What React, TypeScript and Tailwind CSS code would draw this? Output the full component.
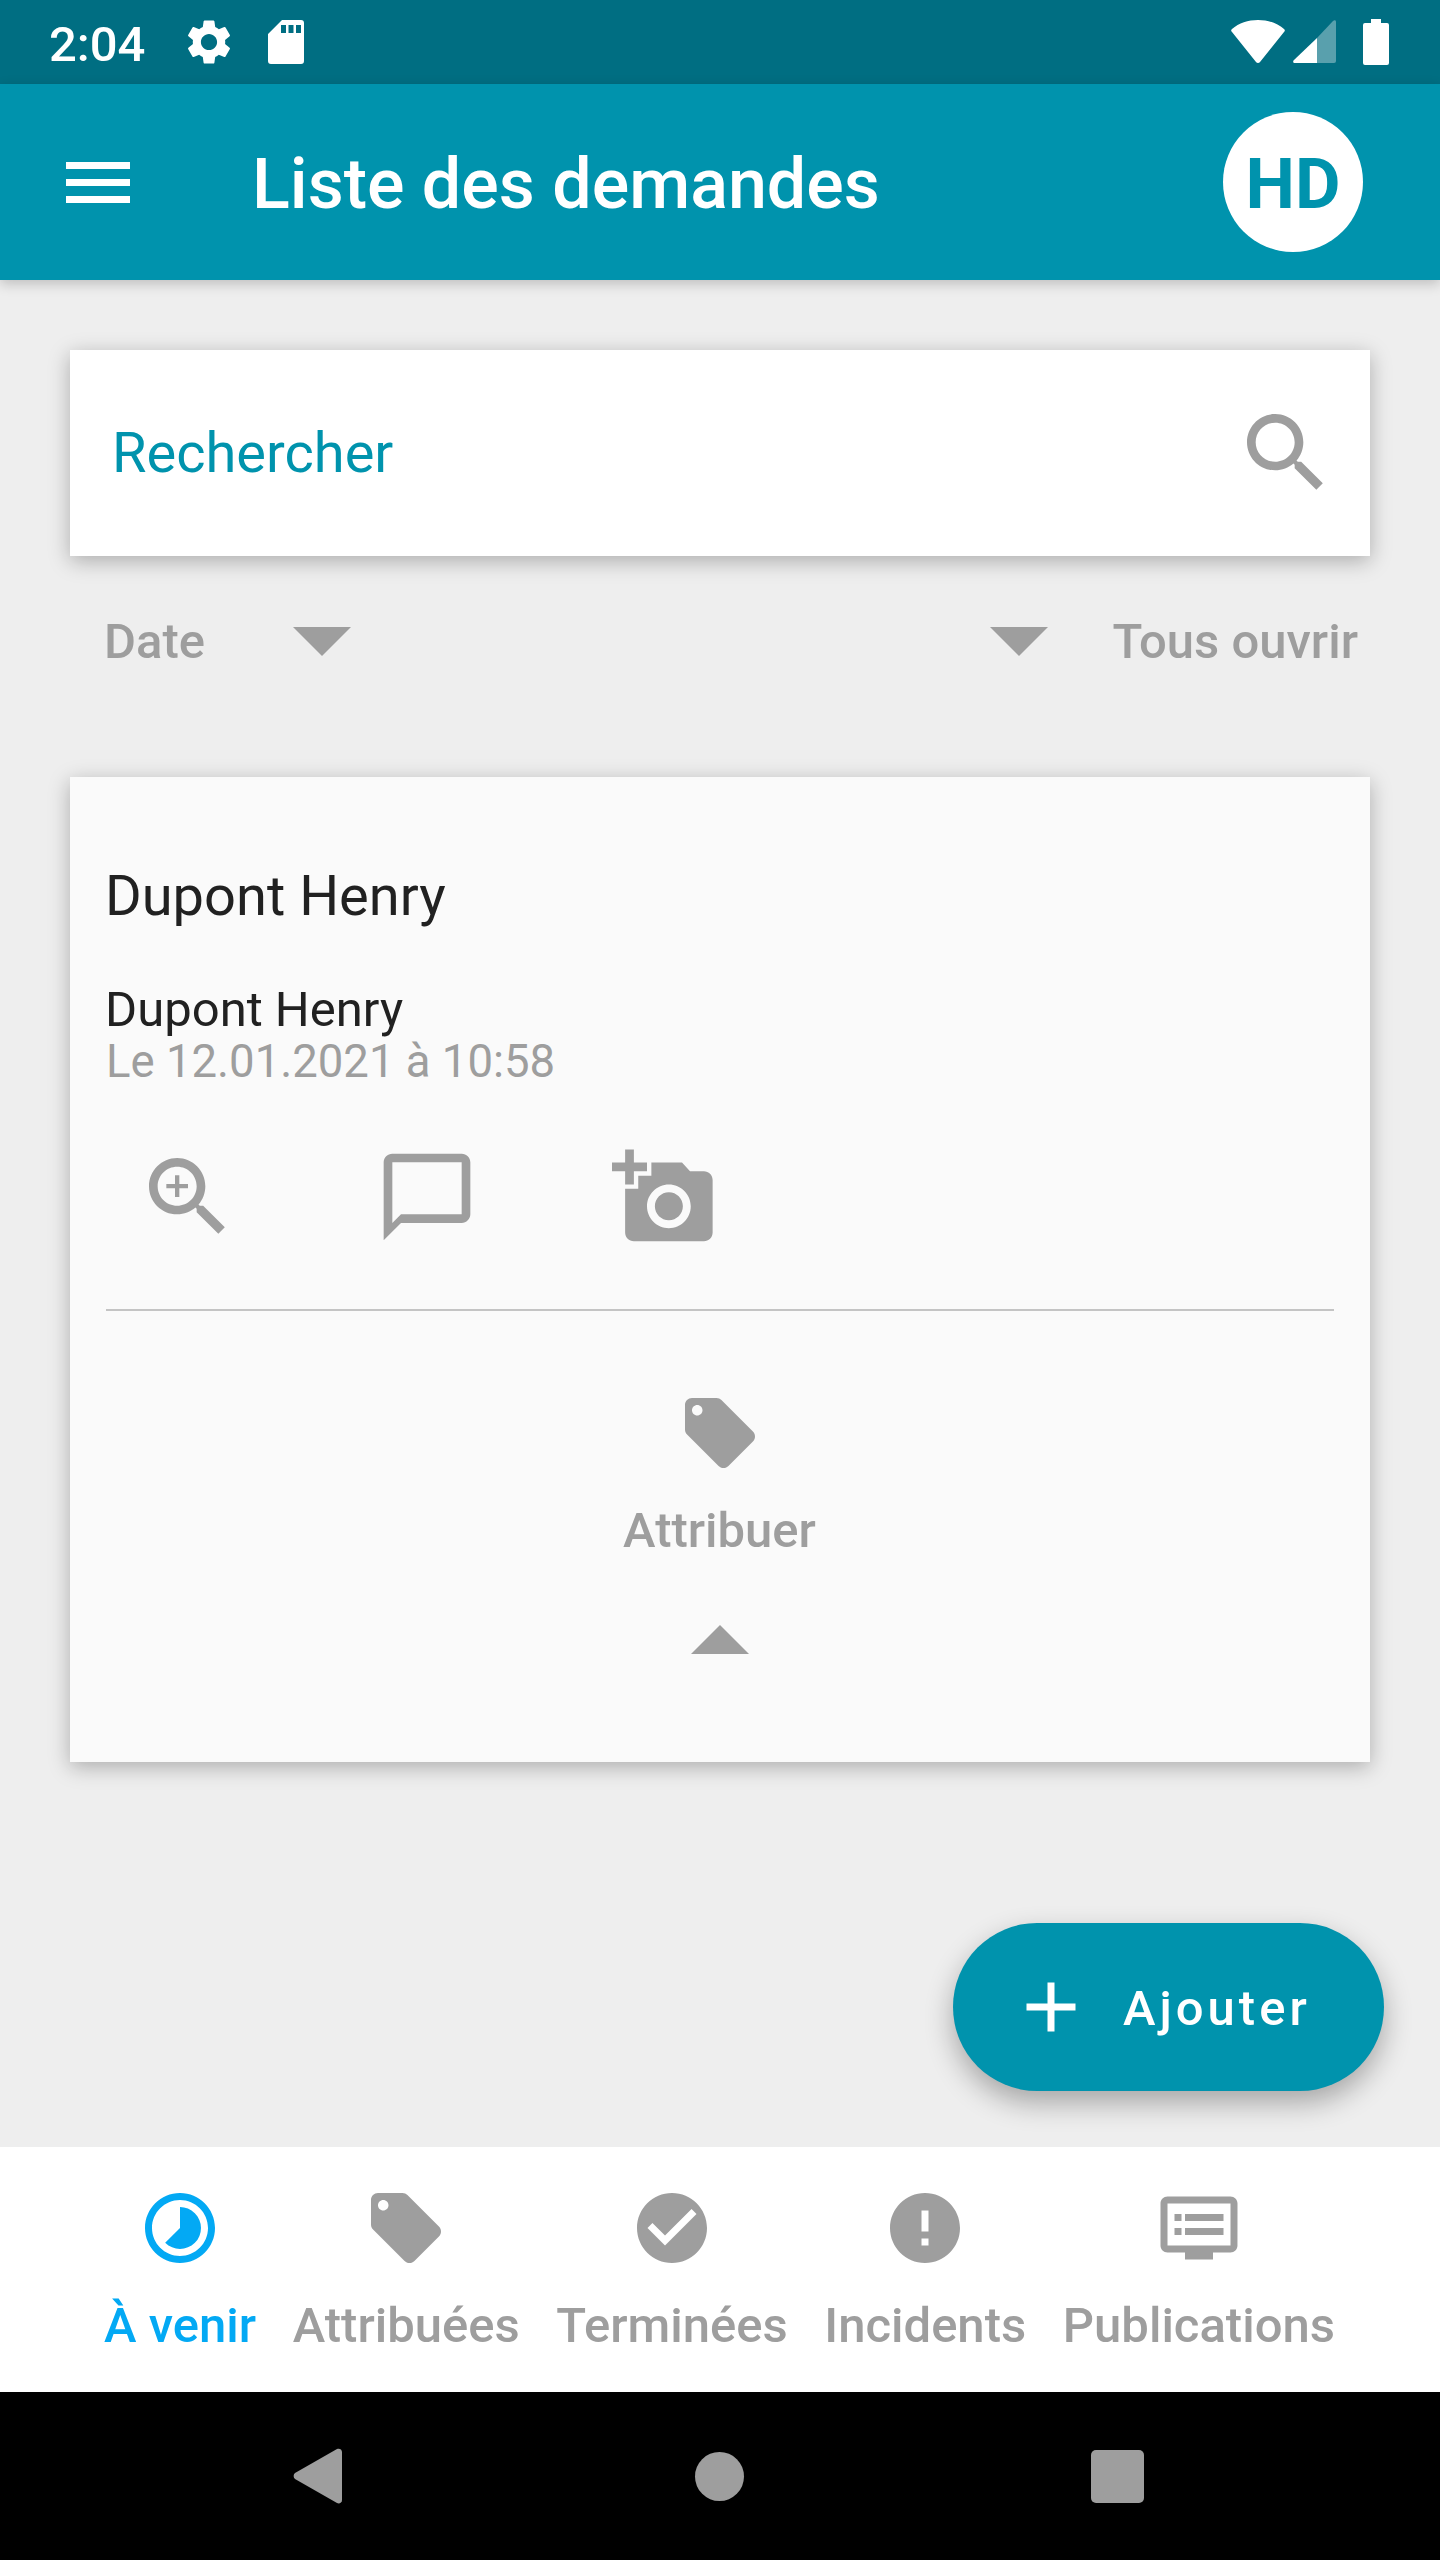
import React from 'react';

const roboto = { fontFamily: 'Roboto, sans-serif' };

const searchPath =
  'M15.5 14h-.79l-.28-.27C15.41 12.59 16 11.11 16 9.5 16 5.91 13.09 3 9.5 3S3 5.91 3 9.5 5.91 16 9.5 16c1.61 0 3.09-.59 4.23-1.57l.27.28v.79l5 4.99L20.49 19l-4.99-5zm-6 0C7.01 14 5 11.99 5 9.5S7.01 5 9.5 5 14 7.01 14 9.5 11.99 14 9.5 14z';

const Tag = ({ className }: { className: string }) => (
  <svg viewBox="0 0 24 24" className={className} fill="currentColor">
    <path d="M21.41 11.58l-9-9C12.05 2.22 11.55 2 11 2H4c-1.1 0-2 .9-2 2v7c0 .55.22 1.05.59 1.42l9 9c.36.36.86.58 1.41.58.55 0 1.05-.22 1.41-.59l7-7c.37-.36.59-.86.59-1.41 0-.55-.23-1.06-.59-1.42zM5.5 7C4.67 7 4 6.33 4 5.5S4.67 4 5.5 4 7 4.67 7 5.5 6.33 7 5.5 7z" />
  </svg>
);

const StatusBar = () => (
  <div className="flex h-[84px] items-center justify-between bg-[#006e82] pl-[49px] pr-[51px] text-white">
    <div className="flex items-center">
      <span className="w-[97px] pt-[5px] text-[49px] font-medium leading-none">2:04</span>
      <svg viewBox="0 0 24 24" className="ml-[36px] h-[54px] w-[54px]" fill="currentColor">
        <path d="M19.14 12.94c.04-.3.06-.61.06-.94 0-.32-.02-.64-.07-.94l2.03-1.58c.18-.14.23-.41.12-.61l-1.92-3.32c-.12-.22-.37-.29-.59-.22l-2.39.96c-.5-.38-1.03-.7-1.62-.94l-.36-2.54c-.04-.24-.24-.41-.48-.41h-3.84c-.24 0-.43.17-.47.41l-.36 2.54c-.59.24-1.13.57-1.62.94l-2.39-.96c-.22-.08-.47 0-.59.22L2.74 8.87c-.12.21-.08.47.12.61l2.03 1.58c-.05.3-.09.63-.09.94s.02.64.07.94l-2.03 1.58c-.18.14-.23.41-.12.61l1.92 3.32c.12.22.37.29.59.22l2.39-.96c.5.38 1.03.7 1.62.94l.36 2.54c.05.24.24.41.48.41h3.84c.24 0 .44-.17.47-.41l.36-2.54c.59-.24 1.13-.56 1.62-.94l2.39.96c.22.08.47 0 .59-.22l1.92-3.32c.12-.22.07-.47-.12-.61l-2.01-1.58zM12 15.6c-1.98 0-3.6-1.62-3.6-3.6s1.62-3.6 3.6-3.6 3.6 1.62 3.6 3.6-1.62 3.6-3.6 3.6z" />
      </svg>
      <svg viewBox="0 0 36 44" className="ml-[32px] h-[44px] w-[36px]" fill="currentColor">
        <path fillRule="evenodd" d="M14 0h19a3 3 0 0 1 3 3v38a3 3 0 0 1-3 3H3a3 3 0 0 1-3-3V14zM13 5h5v8h-5zM20.5 5h5v8h-5zM28 5h5v8h-5z" />
      </svg>
    </div>
    <div className="flex items-center">
      <svg viewBox="0 0 54 44" className="h-[44px] w-[54px]" fill="currentColor">
        <path d="M27 0C17 0 8 3 1 9a2 2 0 0 0 0 3l24 30a2.5 2.5 0 0 0 4 0l24-30a2 2 0 0 0 0-3C46 3 37 0 27 0z" />
      </svg>
      <svg viewBox="0 0 43 44" className="ml-[8px] h-[44px] w-[43px]">
        <path fill="#ffffff" d="M24 18v25H2c-2 0-2.5-1.5-1-3z" />
        <path fill="#ffffff" fillOpacity="0.35" d="M24 18L40 1c1.5-1.5 3-1 3 1v39a2 2 0 0 1-2 2H24z" />
      </svg>
      <svg viewBox="0 0 26 46" className="ml-[27px] h-[46px] w-[26px]" fill="currentColor">
        <path d="M8 0h10v4h6a2 2 0 0 1 2 2v38a2 2 0 0 1-2 2H2a2 2 0 0 1-2-2V6a2 2 0 0 1 2-2h6z" />
      </svg>
    </div>
  </div>
);

const Toolbar = () => (
  <div className="relative z-10 flex h-[196px] items-center bg-[#0093ad] pl-[66px] pr-[77px] shadow-[0_4px_12px_rgba(0,0,0,0.2)]">
    <div className="flex w-[64px] flex-col gap-[10px]">
      <div className="h-[7px] bg-white" />
      <div className="h-[7px] bg-white" />
      <div className="h-[7px] bg-white" />
    </div>
    <div className="ml-[122px] flex-1 pt-[4px] text-[70px] font-medium leading-none text-white">Liste des demandes</div>
    <div className="flex h-[140px] w-[140px] items-center justify-center rounded-full bg-white pt-[4px] text-[70px] font-bold leading-none text-[#0093ad]">
      HD
    </div>
  </div>
);

const SearchCard = () => (
  <div className="mx-[70px] flex h-[206px] items-center justify-between bg-white pl-[42px] pr-[32px] shadow-[0_5px_20px_rgba(0,0,0,0.28)]">
    <span className="text-[56px] leading-none text-[#0093ad]">Rechercher</span>
    <svg viewBox="0 0 24 24" className="h-[104px] w-[104px] text-[#9e9e9e]" fill="currentColor">
      <path d={searchPath} />
    </svg>
  </div>
);

const FilterRow = () => (
  <div className="ml-[104px] mr-[82px] mt-[55px] flex h-[60px] items-center justify-between text-[49px] font-medium leading-none text-[#9e9e9e]">
    <div className="flex items-center">
      <span>Date</span>
      <div className="ml-[88px] mt-[1px] h-0 w-0 border-x-[29px] border-t-[29px] border-x-transparent border-t-[#9e9e9e]" />
    </div>
    <div className="flex items-center">
      <div className="mr-[65px] mt-[1px] h-0 w-0 border-x-[29px] border-t-[29px] border-x-transparent border-t-[#9e9e9e]" />
      <span>Tous ouvrir</span>
    </div>
  </div>
);

const ActionIcons = () => (
  <div className="mt-[56px] flex h-[106px] items-center text-[#9e9e9e]">
    <svg viewBox="0 0 24 24" className="ml-[31px] h-[104px] w-[104px]" fill="currentColor">
      <path d={searchPath} />
      <path d="M12 10h-2v2H9v-2H7V9h2V7h1v2h2v1z" />
    </svg>
    <svg viewBox="0 0 24 24" className="ml-[135px] h-[104px] w-[104px]" fill="currentColor">
      <path d="M20 2H4c-1.1 0-2 .9-2 2v18l4-4h14c1.1 0 2-.9 2-2V4c0-1.1-.9-2-2-2zm0 14H6l-2 2V4h16v12z" />
    </svg>
    <svg viewBox="0 0 24 24" className="ml-[133px] h-[105px] w-[105px]" fill="currentColor">
      <path d="M3 4V1h2v3h3v2H5v3H3V6H0V4h3zm3 6V7h3V4h7l1.83 2H21c1.1 0 2 .9 2 2v12c0 1.1-.9 2-2 2H5c-1.1 0-2-.9-2-2V10h3zm7 9c2.76 0 5-2.24 5-5s-2.24-5-5-5-5 2.24-5 5 2.24 5 5 5zm-3.2-5c0 1.77 1.43 3.2 3.2 3.2s3.2-1.43 3.2-3.2-1.43-3.2-3.2-3.2-3.2 1.43-3.2 3.2z" />
    </svg>
  </div>
);

const RequestCard = () => (
  <div className="mx-[70px] mt-[106px] h-[985px] bg-[#fafafa] pl-[35px] pr-[36px] pt-[91px] shadow-[0_5px_20px_rgba(0,0,0,0.28)]">
    <div className="text-[56px] leading-none text-[#212121]">Dupont Henry</div>
    <div className="mt-[60px] text-[49px] leading-[52px] text-[#212121]">Dupont Henry</div>
    <div className="ml-[1px] text-[45.5px] leading-[52px] text-[#9e9e9e]">Le 12.01.2021 à 10:58</div>
    <ActionIcons />
    <div className="ml-[1px] mt-[59px] h-[2px] bg-[#c4c4c4]" />
    <div className="flex flex-col items-center text-[#9e9e9e]">
      <Tag className="mt-[80px] h-[84px] w-[84px]" />
      <div className="mt-[31px] text-[49px] font-medium leading-none">Attribuer</div>
      <div className="mt-[70px] h-0 w-0 border-x-[29px] border-b-[29px] border-x-transparent border-b-[#9e9e9e]" />
    </div>
  </div>
);

const Fab = () => (
  <div className="absolute left-[953px] top-[1923px] flex h-[168px] w-[431px] items-center rounded-[84px] bg-[#0093ad] pl-[56px] text-white shadow-[0_12px_28px_rgba(0,0,0,0.3)]">
    <svg viewBox="0 0 24 24" className="h-[84px] w-[84px]" fill="currentColor">
      <path d="M19 13h-6v6h-2v-6H5v-2h6V5h2v6h6v2z" />
    </svg>
    <span className="ml-[30px] pt-[3px] text-[49px] font-medium leading-none tracking-[4px]">Ajouter</span>
  </div>
);

const NavItem = ({ label, active, icon }: { label: string; active?: boolean; icon: React.ReactNode }) => (
  <div className={`flex flex-col items-center ${active ? 'text-[#03a9f4]' : 'text-[#9e9e9e]'}`}>
    <div className="flex h-[84px] items-center justify-center">{icon}</div>
    <div className="mt-[31px] text-[49px] font-medium leading-none">{label}</div>
  </div>
);

const BottomNav = () => (
  <div className="flex h-[245px] justify-between bg-white pl-[104px] pr-[105px] pt-[39px]">
    <NavItem
      active
      label="À venir"
      icon={
        <svg viewBox="0 0 24 24" className="h-[84px] w-[84px]" fill="currentColor">
          <path d="M16.24 7.76C15.07 6.59 13.54 6 12 6v6l-4.24 4.24c2.34 2.34 6.14 2.34 8.49 0 2.34-2.34 2.34-6.14-.01-8.48zM12 2C6.48 2 2 6.48 2 12s4.48 10 10 10 10-4.48 10-10S17.52 2 12 2zm0 18c-4.42 0-8-3.58-8-8s3.58-8 8-8 8 3.58 8 8-3.58 8-8 8z" />
        </svg>
      }
    />
    <NavItem label="Attribuées" icon={<Tag className="h-[84px] w-[84px]" />} />
    <NavItem
      label="Terminées"
      icon={
        <svg viewBox="0 0 24 24" className="h-[84px] w-[84px]" fill="currentColor">
          <path d="M12 2C6.48 2 2 6.48 2 12s4.48 10 10 10 10-4.48 10-10S17.52 2 12 2zm-2 15l-5-5 1.41-1.41L10 14.17l7.59-7.59L19 8l-9 9z" />
        </svg>
      }
    />
    <NavItem
      label="Incidents"
      icon={
        <svg viewBox="0 0 24 24" className="h-[84px] w-[84px]" fill="currentColor">
          <path d="M12 2C6.48 2 2 6.48 2 12s4.48 10 10 10 10-4.48 10-10S17.52 2 12 2zm1 15h-2v-2h2v2zm0-4h-2V7h2v6z" />
        </svg>
      }
    />
    <NavItem
      label="Publications"
      icon={
        <svg viewBox="0 0 24 24" className="h-[84px] w-[84px]" fill="currentColor">
          <path d="M21 3H3c-1.1 0-2 .9-2 2v12c0 1.1.9 2 2 2h5v2h8v-2h5c1.1 0 1.99-.9 1.99-2L23 5c0-1.1-.9-2-2-2zm0 14H3V5h18v12zm-2-9H8v2h11V8zm0 4H8v2h11v-2zM7 8H5v2h2V8zm0 4H5v2h2v-2z" />
        </svg>
      }
    />
  </div>
);

const NavBar = () => (
  <div className="flex h-[168px] items-center bg-black text-[#9e9e9e]">
    <svg viewBox="0 0 50 56" className="ml-[293px] h-[56px] w-[50px]" fill="currentColor">
      <path d="M2 31a4 4 0 0 1 0-6L44 1c2-1 5 0 5 3v48c0 3-3 4-5 3z" />
    </svg>
    <div className="ml-[352px] h-[49px] w-[49px] rounded-full bg-[#9e9e9e]" />
    <div className="ml-[347px] h-[53px] w-[53px] rounded-[5px] bg-[#9e9e9e]" />
  </div>
);

export default function App() {
  return (
    <div style={roboto} className="relative h-[2560px] w-[1440px] overflow-hidden bg-[#eeeeee]">
      <StatusBar />
      <Toolbar />
      <div className="h-[1867px] pt-[70px]">
        <SearchCard />
        <FilterRow />
        <RequestCard />
      </div>
      <BottomNav />
      <NavBar />
      <Fab />
    </div>
  );
}
